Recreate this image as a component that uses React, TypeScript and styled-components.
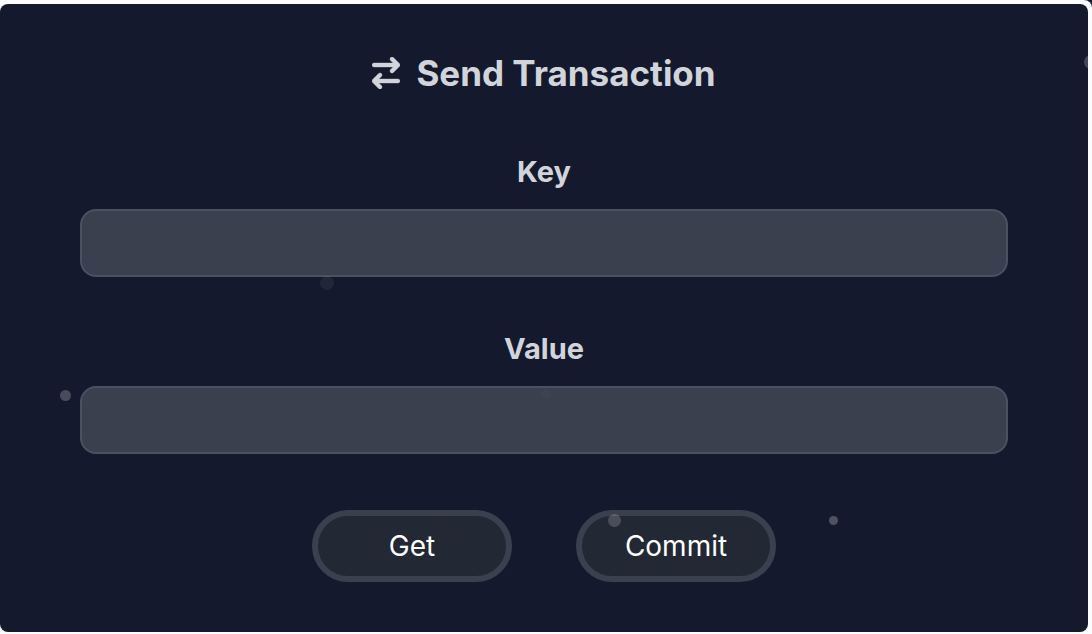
import React from 'react';
import styled, { createGlobalStyle } from 'styled-components';
import { FaArrowRightArrowLeft } from 'react-icons/fa6';

const GlobalStyle = createGlobalStyle`
  *, *::before, *::after { box-sizing: border-box; }
  body {
    margin: 0;
    background: #14192d;
    font-family: Inter, "Liberation Sans", sans-serif;
  }
`;

const Page = styled.main`
  min-height: 100vh;
  padding: 4px 4px 2px 0;
  border-top-right-radius: 8px;
  background: #fafcfd;
`;

const Card = styled.form`
  position: relative;
  overflow: hidden;
  display: flex;
  flex-direction: column;
  padding: 49px 80px 50px;
  border-radius: 8px;
  background: #14192d;
  color: #d1d5db;
`;

const Title = styled.h1`
  display: flex;
  align-items: center;
  justify-content: center;
  gap: 16px;
  margin: 0 0 61px;
  font-size: 35px;
  line-height: 40px;
  font-weight: 700;

  svg {
    width: 28px;
    height: 32px;
    stroke: currentColor;
    stroke-width: 6px;
  }
`;

const Field = styled.div`
  display: flex;
  flex-direction: column;
  margin-bottom: 54px;
`;

const Label = styled.label`
  margin-bottom: 19px;
  font-size: 29px;
  line-height: 36px;
  font-weight: 700;
  text-align: center;
`;

const TextInput = styled.input`
  width: 100%;
  height: 68px;
  padding: 0 24px;
  border: 2px solid #4b5160;
  border-radius: 16px;
  outline: none;
  background: #3b404f;
  color: #ffffff;
  font: inherit;
  font-size: 28px;
`;

const Actions = styled.div`
  display: flex;
  justify-content: center;
  gap: 64px;
  padding-top: 2px;
`;

const PillButton = styled.button`
  width: 200px;
  height: 72px;
  border: 6px solid #3b404f;
  border-radius: 36px;
  background: #222834;
  color: #ffffff;
  font: inherit;
  font-size: 28px;
  line-height: 40px;
`;

const Dot = styled.span<{ $x: number; $y: number; $size: number; $alpha: number }>`
  position: absolute;
  left: ${({ $x }) => $x}px;
  top: ${({ $y }) => $y}px;
  width: ${({ $size }) => $size}px;
  height: ${({ $size }) => $size}px;
  border-radius: 50%;
  background: rgba(255, 255, 255, ${({ $alpha }) => $alpha});
  pointer-events: none;
`;

const dots = [
  { x: 1084, y: 51, size: 14, alpha: 0.2 },
  { x: 320, y: 272, size: 14, alpha: 0.06 },
  { x: 60, y: 386, size: 11, alpha: 0.22 },
  { x: 541, y: 385, size: 10, alpha: 0.02 },
  { x: 608, y: 510, size: 13, alpha: 0.18 },
  { x: 829, y: 512, size: 9, alpha: 0.25 },
];

export default function App() {
  return (
    <>
      <GlobalStyle />
      <Page>
        <Card onSubmit={(event) => event.preventDefault()}>
          <Title>
            <FaArrowRightArrowLeft aria-hidden="true" />
            Send Transaction
          </Title>
          <Field>
            <Label htmlFor="key">Key</Label>
            <TextInput id="key" type="text" />
          </Field>
          <Field>
            <Label htmlFor="value">Value</Label>
            <TextInput id="value" type="text" />
          </Field>
          <Actions>
            <PillButton type="button">Get</PillButton>
            <PillButton type="submit">Commit</PillButton>
          </Actions>
          {dots.map((dot) => (
            <Dot key={dot.x} $x={dot.x} $y={dot.y} $size={dot.size} $alpha={dot.alpha} />
          ))}
        </Card>
      </Page>
    </>
  );
}
